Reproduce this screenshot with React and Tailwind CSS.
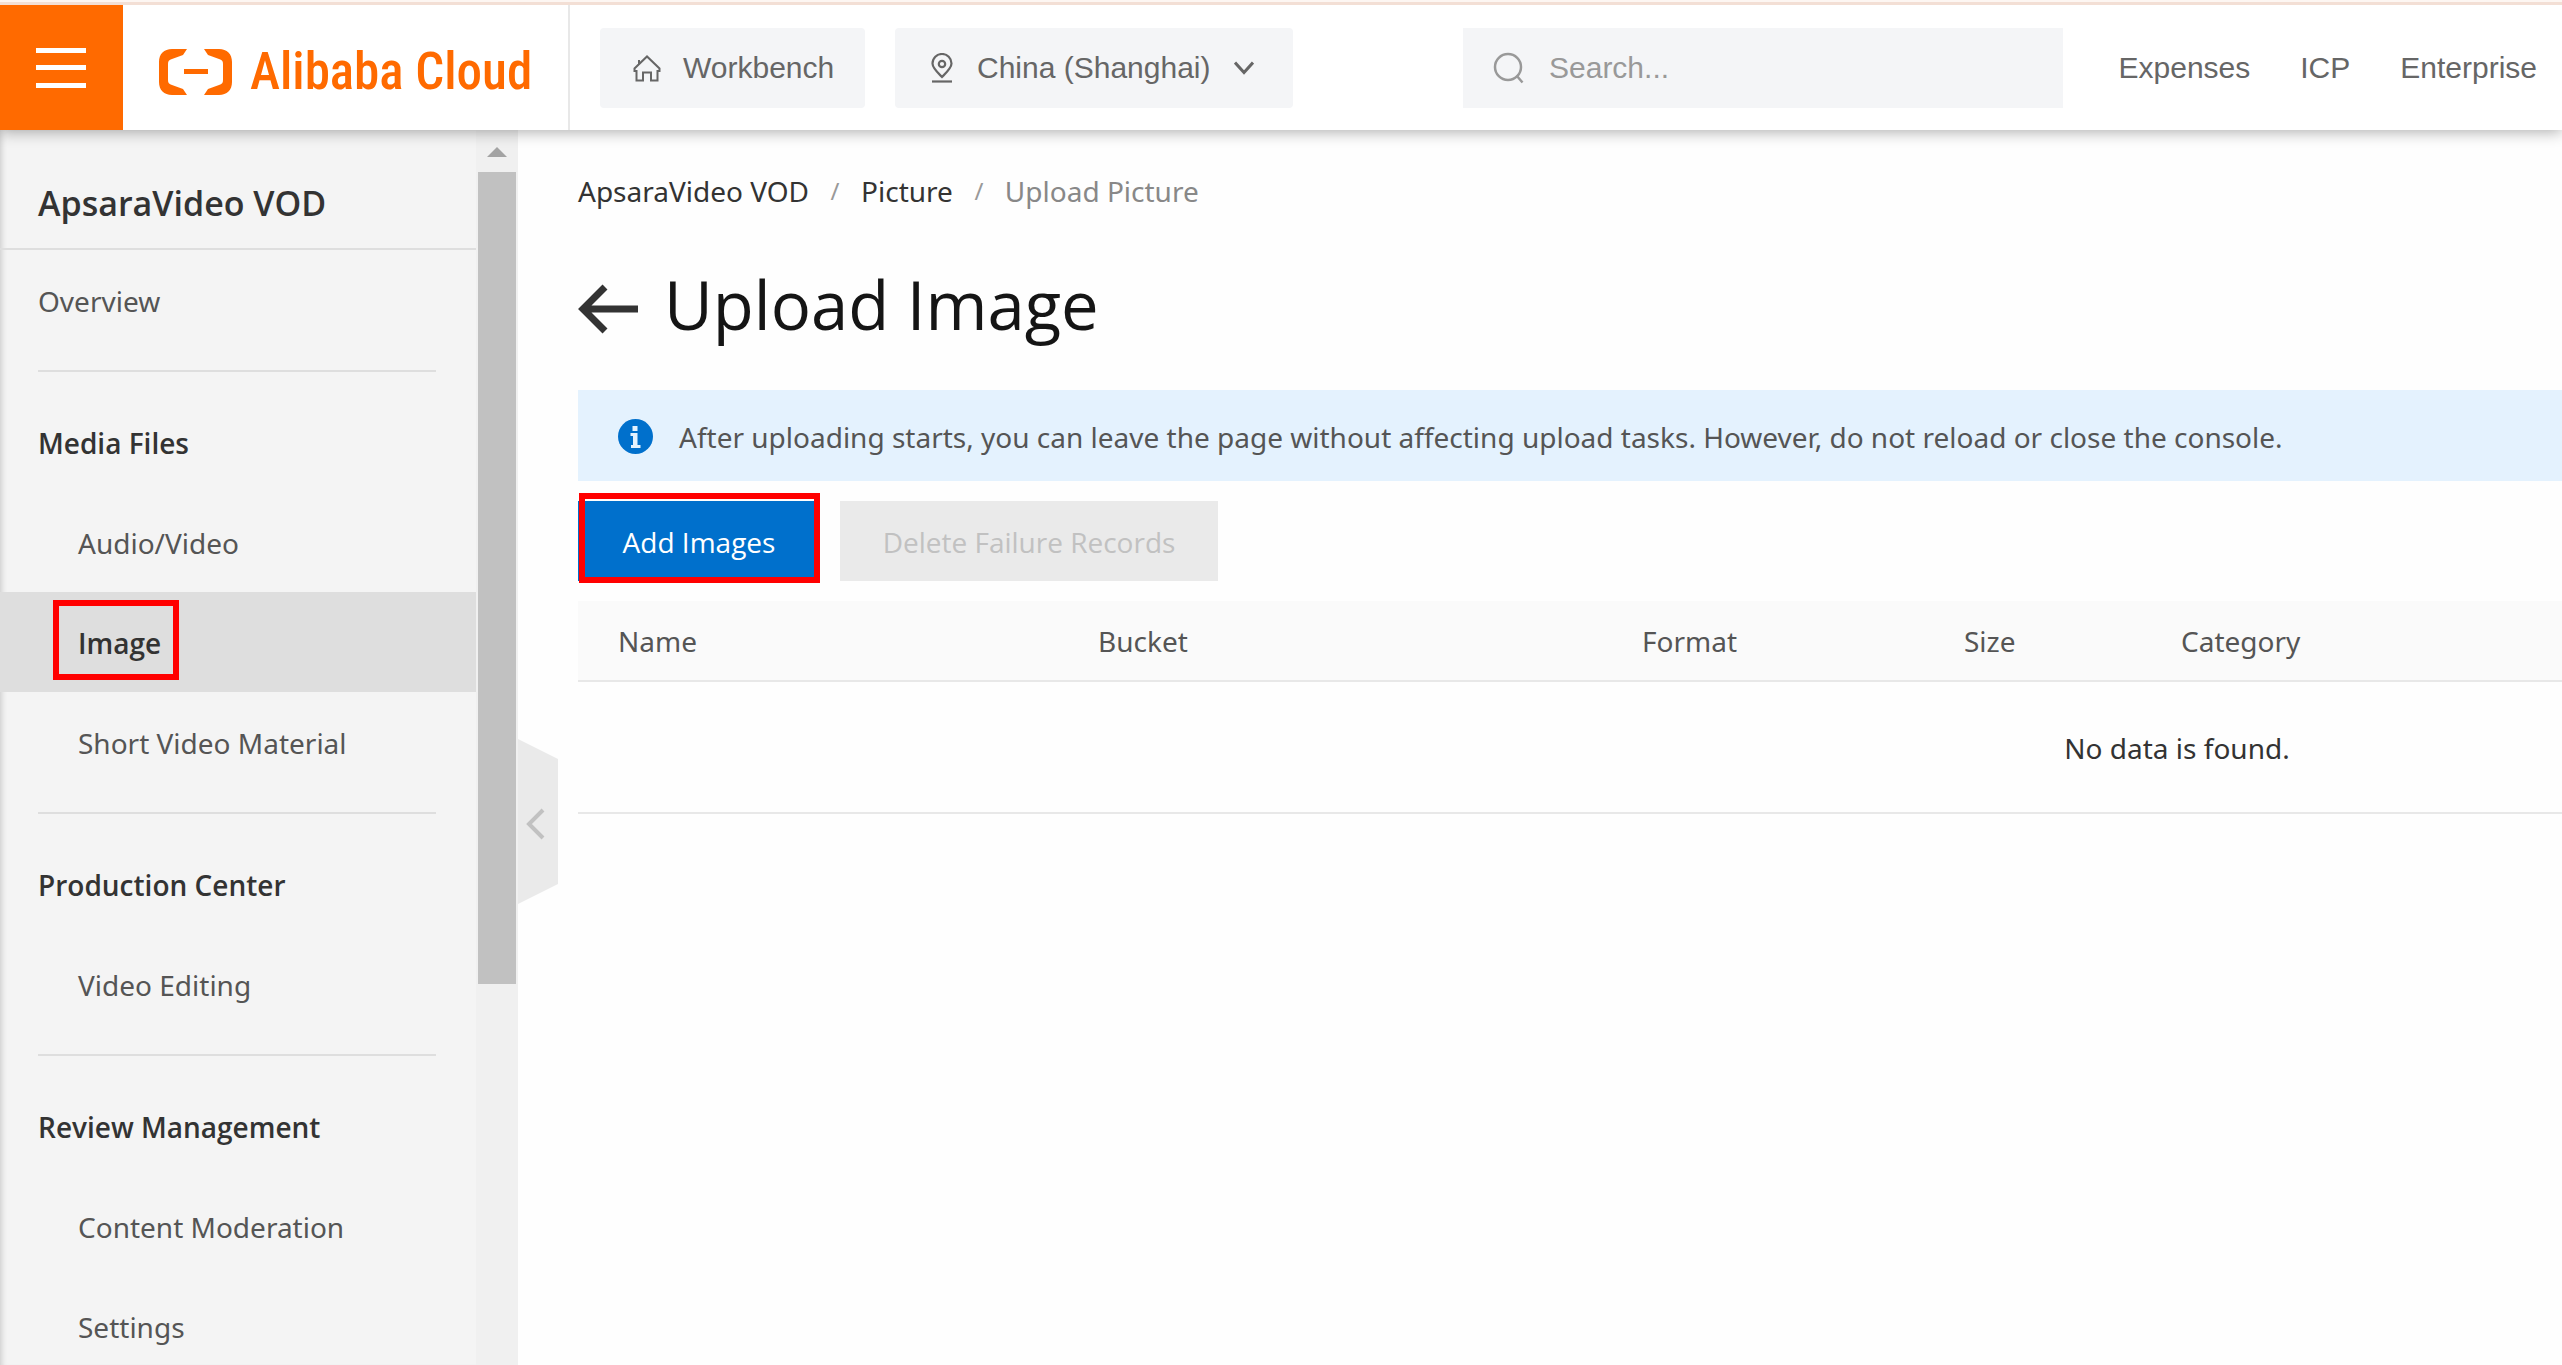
import React from "react";

const menu = [
  { items: [{ label: "Overview", top: true }] },
  {
    title: "Media Files",
    items: [
      { label: "Audio/Video" },
      { label: "Image", active: true },
      { label: "Short Video Material" },
    ],
  },
  { title: "Production Center", items: [{ label: "Video Editing" }] },
  {
    title: "Review Management",
    items: [{ label: "Content Moderation" }, { label: "Settings" }],
  },
];

function Logo() {
  return (
    <a href="#home" className="flex items-center gap-[18px] pl-9 text-[#ff6a00]">
      <svg width="73" height="46" viewBox="0 0 73 46" fill="currentColor" aria-hidden="true">
        <path d="M28 0H13C5 0 0 5 0 13v20c0 8 5 13 13 13h15l-4-6-11-4c-3-1-4-2-4-5V15c0-3 1-4 4-5l11-4z" />
        <path d="M45 0h15c8 0 13 5 13 13v20c0 8-5 13-13 13H45l4-6 11-4c3-1 4-2 4-5V15c0-3-1-4-4-5L49 6z" />
        <path d="M25 20h24v5H25z" />
      </svg>
      <span className="whitespace-nowrap font-['Roboto_Condensed','Roboto',sans-serif] text-[51px] font-medium leading-[60px]">
        Alibaba Cloud
      </span>
    </a>
  );
}

function HomeIcon() {
  return (
    <svg width="28" height="27" viewBox="0 0 28 27" fill="none" stroke="currentColor" strokeWidth="2" aria-hidden="true">
      <path d="M3.500 16H1.500V13.500L14 1.500 26.500 13.500V16h-2v9.500h-6.500v-8h-8v8H3.500zM6 9V5" />
    </svg>
  );
}

function PinIcon() {
  return (
    <svg width="22" height="30" viewBox="0 0 22 30" fill="none" stroke="currentColor" strokeWidth="2.200" aria-hidden="true">
      <path d="M11 24C6 19 1.500 15 1.500 10.500a9.500 9.500 0 0 1 19 0C20.500 15 16 19 11 24z" />
      <circle cx="11" cy="11" r="3.200" />
      <path d="M1 28.500h20" />
    </svg>
  );
}

function Header() {
  return (
    <header className="relative z-20 flex h-32 shrink-0 items-stretch border-t-[3px] border-[#f3dfd5] bg-white font-['Liberation_Sans',Arial,sans-serif] text-[30px] text-[#666] shadow-[0_2px_14px_rgba(0,0,0,0.32)]">
      <button aria-label="Open menu" className="flex w-[123px] shrink-0 justify-center bg-[#ff6a00] pr-0.5 pt-[43px]">
        <svg width="50" height="40" viewBox="0 0 50 40" fill="#fff" aria-hidden="true">
          <path d="M0 0h50v5H0zM0 17h50v5H0zM0 35h50v5H0z" />
        </svg>
      </button>
      <div className="flex w-[447px] shrink-0 items-center border-r-2 border-[#e8e8e8] pt-2">
        <Logo />
      </div>
      <div className="flex min-w-0 flex-1 items-start pl-[30px] pt-[23px]">
        <button className="flex h-20 w-[265px] shrink-0 items-center gap-[22px] rounded bg-[#f4f5f7] pl-[33px]">
          <HomeIcon />
          <span>Workbench</span>
        </button>
        <button className="ml-[30px] flex h-20 w-[398px] shrink-0 items-center rounded bg-[#f4f5f7] pl-9">
          <PinIcon />
          <span className="ml-6 whitespace-nowrap">China (Shanghai)</span>
          <svg className="ml-6" width="20" height="14" viewBox="0 0 20 14" fill="none" stroke="currentColor" strokeWidth="3" aria-hidden="true">
            <path d="M1 1.500 10 11.500 19 1.500" />
          </svg>
        </button>
        <label className="ml-[170px] flex h-20 min-w-0 max-w-[600px] flex-1 items-center gap-6 bg-[#f4f5f7] pl-[30px] text-[#999]">
          <svg className="shrink-0" width="32" height="32" viewBox="0 0 32 32" fill="none" stroke="currentColor" strokeWidth="2.500" aria-hidden="true">
            <circle cx="15" cy="15" r="13" />
            <path d="M23.500 23.500 29.500 30.500" />
          </svg>
          <input
            type="text"
            aria-label="Search"
            placeholder="Search..."
            className="min-w-0 flex-1 bg-transparent outline-none placeholder:text-[#999]"
          />
        </label>
        <nav className="ml-auto flex h-20 shrink-0 items-center gap-[50px] pl-10 pr-[25px]">
          <a href="#expenses">Expenses</a>
          <a href="#icp">ICP</a>
          <a href="#enterprise">Enterprise</a>
        </nav>
      </div>
    </header>
  );
}

function MenuItem({ label, top, active }) {
  if (active) {
    return (
      <li>
        <a href="#image" aria-current="page" className="flex h-[100px] items-center bg-[#dedede] pb-1 pl-[53px] font-['Open_Sans',sans-serif] font-semibold text-[#333]">
          <span className="flex h-20 items-center border-[6px] border-[#ff0000] pl-[19px] pr-3 pt-1.5">{label}</span>
        </a>
      </li>
    );
  }
  return (
    <li>
      <a href="#section" className={top ? "flex h-[100px] items-center pl-[38px] pt-0.5" : "flex h-[100px] items-center pl-[78px] pt-0.5"}>
        {label}
      </a>
    </li>
  );
}

function Sidebar() {
  return (
    <aside className="relative flex w-[518px] shrink-0">
      <div className="flex-1 overflow-hidden bg-[#f4f4f4] text-[#555] shadow-[inset_6px_0_6px_-5px_rgba(0,0,0,0.2)]">
        <h2 className="flex h-[120px] items-center border-b-2 border-[#dedede] pl-[38px] pt-7 font-['Open_Sans',sans-serif] text-[34px] font-semibold text-[#333]">
          ApsaraVideo VOD
        </h2>
        {menu.map((group, i) => (
          <section key={i}>
            {i > 0 && <hr className="my-5 ml-[38px] mr-10 border-t-2 border-[#dedede]" />}
            {group.title && (
              <h3 className="flex h-[100px] items-center pl-[38px] pt-0.5 font-['Open_Sans',sans-serif] font-semibold text-[#333]">{group.title}</h3>
            )}
            <ul>
              {group.items.map((item) => (
                <MenuItem key={item.label} {...item} />
              ))}
            </ul>
          </section>
        ))}
      </div>
      <div className="flex w-[42px] flex-col items-center bg-[#f0f0f0] pt-[17px]">
        <svg width="20" height="10" viewBox="0 0 20 10" fill="#a3a3a3" aria-hidden="true">
          <path d="M10 0 20 10H0z" />
        </svg>
        <div className="mt-[15px] h-[812px] w-[38px] bg-[#c1c1c1]" />
      </div>
      <button aria-label="Collapse sidebar" className="absolute left-full top-[609px]">
        <svg width="40" height="165" viewBox="0 0 40 165" fill="none" aria-hidden="true">
          <path d="M0 0 40 20V145L0 165z" fill="#eaeaea" />
          <path d="M25 71 11 85 25 99" stroke="#c1c1c1" strokeWidth="4" />
        </svg>
      </button>
    </aside>
  );
}

function Main() {
  return (
    <main className="min-w-0 flex-1 overflow-hidden pl-[60px] pt-10">
      <nav aria-label="Breadcrumb" className="flex h-[42px] items-center text-[#333]">
        <a href="#vod">ApsaraVideo VOD</a>
        <span className="w-[52px] text-center text-2xl text-[#999]">/</span>
        <a href="#picture">Picture</a>
        <span className="w-[52px] text-center text-2xl text-[#999]">/</span>
        <span className="text-[#888]">Upload Picture</span>
      </nav>
      <div className="mt-9 flex h-[110px] items-center gap-[26px]">
        <button aria-label="Back" className="pt-3">
          <svg width="60" height="50" viewBox="0 0 60 50" fill="none" stroke="#333" strokeWidth="7" aria-hidden="true">
            <path d="M60 25H6M27 3 5 25 27 47" />
          </svg>
        </button>
        <h1 className="pt-0.5 font-['Open_Sans',sans-serif] text-[67px] leading-[90px] text-[#151515]">Upload Image</h1>
      </div>
      <div role="status" className="mt-8 flex h-[91px] items-center gap-[26px] whitespace-nowrap bg-[#e4f2fe] pl-10 pt-0.5 text-[#555]">
        <svg className="shrink-0" width="35" height="35" viewBox="0 0 35 35" aria-hidden="true">
          <circle cx="17.500" cy="17.500" r="17.500" fill="#0070cc" />
          <path d="M14.500 7h5v5h-5zM12.500 14h7v12h3v3H13v-3h2v-9h-2.500z" fill="#e4f2fe" />
        </svg>
        After uploading starts, you can leave the page without affecting upload tasks. However, do not reload or close the console.
      </div>
      <div className="mt-5 flex gap-5 font-['Open_Sans',sans-serif]">
        <button className="relative h-20 w-[242px] bg-[#0070cc] pt-0.5 text-white">
          Add Images
          <span className="absolute -bottom-0.5 -top-2 left-px right-0 border-[6px] border-[#ff0000]" />
        </button>
        <button disabled className="h-20 w-[378px] bg-[#eaeaea] pt-0.5 text-[#c1c1c1]">
          Delete Failure Records
        </button>
      </div>
      <table className="mt-5 w-[3198px] table-fixed border-collapse text-left">
        <thead>
          <tr className="h-20 border-b-2 border-[#e8e8e8] bg-[#fafafa] text-[#555]">
            <th scope="col" className="w-[480px] pl-10 font-normal">Name</th>
            <th scope="col" className="w-[544px] pl-10 font-normal">Bucket</th>
            <th scope="col" className="w-[322px] pl-10 font-normal">Format</th>
            <th scope="col" className="w-[217px] pl-10 font-normal">Size</th>
            <th scope="col" className="pl-10 font-normal">Category</th>
          </tr>
        </thead>
        <tbody>
          <tr className="h-[132px] border-b-2 border-[#e8e8e8] text-[#333]">
            <td colSpan={5} className="pt-0.5 text-center">No data is found.</td>
          </tr>
        </tbody>
      </table>
    </main>
  );
}

export default function App() {
  return (
    <div className="flex h-screen flex-col overflow-hidden border-t-2 border-[#fdf6f2] bg-[#fefefe] font-['Noto_Sans','Open_Sans',sans-serif] text-[28px] leading-10">
      <Header />
      <div className="flex min-h-0 flex-1">
        <Sidebar />
        <Main />
      </div>
    </div>
  );
}
